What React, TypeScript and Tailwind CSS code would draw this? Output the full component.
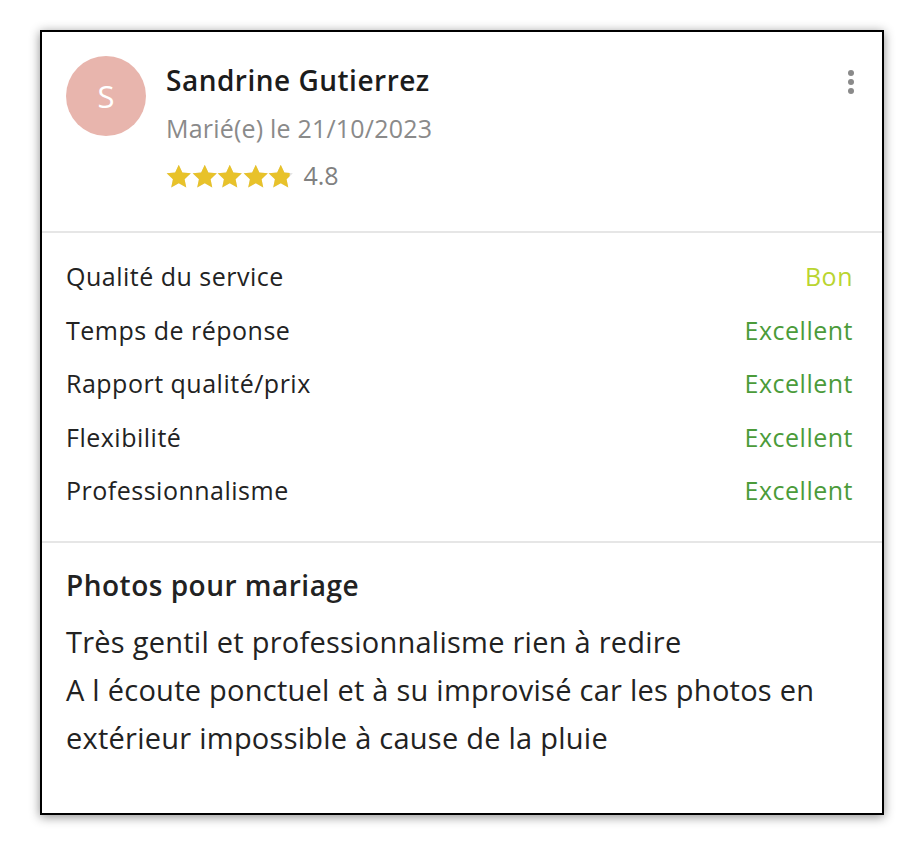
const Star = (props: { fill: number }) => {
  const id = `clip-${Math.round(props.fill * 100)}`;
  const d = "M12 0.6l3.4 7.3 8 .9-5.9 5.5 1.6 7.9L12 18.2l-7.1 4 1.6-7.9L.6 8.8l8-.9z";
  return (
    <svg width="25.5" height="25" viewBox="0 0 24 23.5">
      <defs>
        <clipPath id={id}>
          <rect x="0" y="0" width={24 * props.fill} height="24" />
        </clipPath>
      </defs>
      <path d={d} fill="#e2e2e2" />
      <path d={d} fill="#e8c22a" clipPath={`url(#${id})`} />
    </svg>
  );
};

const ratings = [
  { label: "Qualité du service", value: "Bon", color: "text-[#bad530]" },
  { label: "Temps de réponse", value: "Excellent", color: "text-[#4b9b3a]" },
  { label: "Rapport qualité/prix", value: "Excellent", color: "text-[#4b9b3a]" },
  { label: "Flexibilité", value: "Excellent", color: "text-[#4b9b3a]" },
  { label: "Professionnalisme", value: "Excellent", color: "text-[#4b9b3a]" },
];

export default function App() {
  return (
    <div className="min-h-screen bg-white pl-[40px] pt-[30px] font-['Open_Sans',sans-serif] text-[#222]">
      <div className="w-[844px] border-2 border-black bg-white shadow-[0_2px_10px_rgba(0,0,0,0.45)]">
        <div className="flex px-6 pt-6 pb-[31px]">
          <div className="flex h-20 w-20 shrink-0 items-center justify-center rounded-full bg-[#e8b5ad] text-[31px] text-white">
            S
          </div>
          <div className="ml-5 flex flex-1 flex-col">
            <div className="text-[28px] font-semibold leading-[48px] tracking-[0.5px] text-[#1c1c1c]">
              Sandrine Gutierrez
            </div>
            <div className="text-[25px] leading-[48px] tracking-[0.2px] text-[#8a8a8a]">
              Marié(e) le 21/10/2023
            </div>
            <div className="flex h-12 items-center">
              <div className="flex">
                <Star fill={1} />
                <Star fill={1} />
                <Star fill={1} />
                <Star fill={1} />
                <Star fill={0.85} />
              </div>
              <span className="ml-[10px] text-[25px] text-[#808080]">4.8</span>
            </div>
          </div>
          <svg width="8" height="26" viewBox="0 0 8 26" className="mt-[13px] mr-[3px]">
            <circle cx="4" cy="4" r="3" fill="#8a8a8a" />
            <circle cx="4" cy="13" r="3" fill="#8a8a8a" />
            <circle cx="4" cy="22" r="3" fill="#8a8a8a" />
          </svg>
        </div>
        <div className="h-[2px] bg-[#e6e6e6]" />
        <div className="flex flex-col pt-[17px] pb-[23px] pl-6 pr-[29px]">
          {ratings.map((r) => (
            <div
              key={r.label}
              className="flex h-[53.5px] items-center justify-between text-[25px] tracking-[0.5px]"
            >
              <span>{r.label}</span>
              <span className={r.color}>{r.value}</span>
            </div>
          ))}
        </div>
        <div className="h-[2px] bg-[#e6e6e6]" />
        <div className="px-6 pt-[22px] pb-[51px]">
          <div className="text-[28px] font-semibold leading-[40px] tracking-[0.5px]">
            Photos pour mariage
          </div>
          <p className="mt-[13px] text-[29px] leading-[48px] tracking-[0.25px]">
            Très gentil et professionnalisme rien à redire
            <br />
            A l écoute ponctuel et à su improvisé car les photos en extérieur impossible à cause de la pluie
          </p>
        </div>
      </div>
    </div>
  );
}
